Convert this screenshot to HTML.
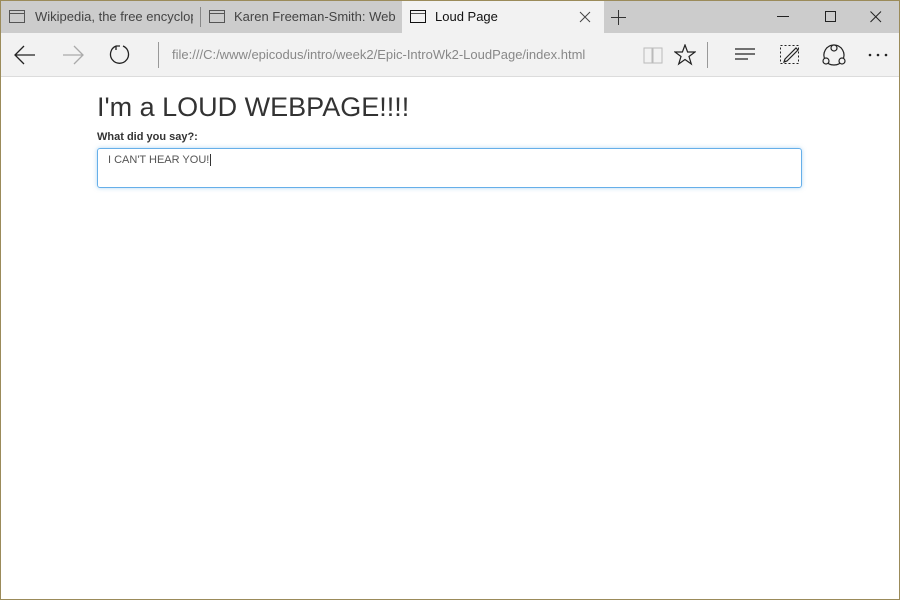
<!DOCTYPE html>
<html><head><meta charset="utf-8"><style>
*{margin:0;padding:0;box-sizing:border-box}
html,body{width:900px;height:600px;overflow:hidden;background:#fff;font-family:"Liberation Sans",sans-serif}
#win{position:absolute;left:0;top:0;width:900px;height:600px;border:1px solid #9b8b5a}
#tabs{position:absolute;left:0;top:0;width:898px;height:32px;background:#cccccc}
.tab{position:absolute;top:0;height:32px;font-size:13px;color:#444;line-height:32px;white-space:nowrap;overflow:hidden}
.ti{position:absolute;top:9px;width:16px;height:13px;border:1px solid #555}
.ti:after{content:"";position:absolute;left:0;right:0;top:2px;border-top:1px solid #555}
#bar{position:absolute;left:0;top:32px;width:898px;height:44px;background:#f2f2f2;border-bottom:1px solid #dcdcdc}
.ic{position:absolute}
h1{position:absolute;left:96px;top:91px;font-size:27px;font-weight:normal;color:#333}
label{position:absolute;left:96px;top:130px;font-size:11px;font-weight:bold;color:#333}
#inp{position:absolute;left:96px;top:147px;width:705px;height:40px;border:1px solid #66afe9;border-radius:3px;box-shadow:0 0 4px rgba(102,175,233,.5);font-size:11px;color:#555;padding:5px 10px}
</style></head><body><div id="win">
<div id="tabs">
 <div class="tab" style="left:0;width:192px;color:#444"><div class="ti" style="left:8px"></div><span style="position:absolute;left:34px">Wikipedia, the free encyclop</span></div>
 <div style="position:absolute;left:199px;top:6px;width:1px;height:20px;background:#888"></div>
 <div class="tab" style="left:200px;width:201px"><div class="ti" style="left:8px"></div><span style="position:absolute;left:33px">Karen Freeman-Smith: Web</span></div>
 <div class="tab" style="left:401px;width:202px;background:#f2f2f2;color:#111"><div class="ti" style="left:8px;border-color:#111"></div><span style="position:absolute;left:33px">Loud Page</span>
  <svg class="ic" style="left:177px;top:10px" width="12" height="12"><path d="M1 1L11 11M11 1L1 11" stroke="#444" stroke-width="1"/></svg></div>
 <svg class="ic" style="left:610px;top:9px" width="15" height="15"><path d="M7.5 0V15M0 7.5H15" stroke="#333"/></svg>
 <svg class="ic" style="left:776px;top:15px" width="12" height="2"><path d="M0 .5H12" stroke="#222"/></svg>
 <svg class="ic" style="left:824px;top:10px" width="12" height="12"><rect x=".5" y=".5" width="10" height="10" fill="none" stroke="#222"/></svg>
 <svg class="ic" style="left:869px;top:10px" width="12" height="12"><path d="M.5 .5L11 11M11 .5L.5 11" stroke="#222"/></svg>
</div>
<div id="bar">
 <svg class="ic" style="left:13px;top:12px" width="22" height="20"><path d="M1 10H21M10 1L1 10L10 19" stroke="#222" fill="none" stroke-width="1.3"/></svg>
 <svg class="ic" style="left:61px;top:12px" width="22" height="20"><path d="M1 10H21M12 1L21 10L12 19" stroke="#aaa" fill="none" stroke-width="1.3"/></svg>
 <svg class="ic" style="left:108px;top:10px" width="22" height="22"><path d="M7 3A9 9 0 1 0 14 3" stroke="#222" fill="none" stroke-width="1.3"/><path d="M7 3H11M7 3V7" stroke="#222" fill="none" stroke-width="1.3"/></svg>
 <div style="position:absolute;left:157px;top:9px;width:1px;height:26px;background:#999"></div>
 <div style="position:absolute;left:171px;top:14px;font-size:13px;color:#888">file:///C:/www/epicodus/intro/week2/Epic-IntroWk2-LoudPage/index.html</div>
 <svg class="ic" style="left:642px;top:13px" width="20" height="18"><path d="M1 2H9V17H1ZM10 2H19V17H10Z" stroke="#bbb" fill="none"/></svg>
 <svg class="ic" style="left:673px;top:11px" width="22" height="22"><path d="M11 1L13.6 8H21L15 12.5L17.3 20L11 15.5L4.7 20L7 12.5L1 8H8.4Z" stroke="#222" fill="none" stroke-width="1.2"/></svg>
 <div style="position:absolute;left:706px;top:9px;width:1px;height:26px;background:#999"></div>
 <svg class="ic" style="left:734px;top:15px" width="20" height="14"><path d="M0 1H20M0 6H20M0 11H13" stroke="#222" stroke-width="1.3"/></svg>
 <svg class="ic" style="left:778px;top:11px" width="22" height="22"><rect x="1.5" y="1.5" width="18" height="18" fill="none" stroke="#222" stroke-dasharray="2 2"/><path d="M6 15L17 4L19 6L8 17L5 18Z" stroke="#222" fill="#f2f2f2" stroke-width="1.2"/></svg>
 <svg class="ic" style="left:821px;top:10px" width="24" height="24"><path d="M12 2A10 10 0 1 1 11.9 2Z" fill="none" stroke="#222" stroke-width="1.2"/><circle cx="12" cy="5" r="3" fill="#f2f2f2" stroke="#222" stroke-width="1.2"/><circle cx="4" cy="18" r="3" fill="#f2f2f2" stroke="#222" stroke-width="1.2"/><circle cx="20" cy="18" r="3" fill="#f2f2f2" stroke="#222" stroke-width="1.2"/></svg>
 <svg class="ic" style="left:867px;top:20px" width="20" height="4"><circle cx="2" cy="2" r="1.3" fill="#222"/><circle cx="10" cy="2" r="1.3" fill="#222"/><circle cx="18" cy="2" r="1.3" fill="#222"/></svg>
</div>
<h1>I'm a LOUD WEBPAGE!!!!</h1>
<label>What did you say?:</label>
<div id="inp">I CAN'T HEAR YOU!<span style="border-left:1px solid #333;margin-left:1px"></span></div>
</div></body></html>
